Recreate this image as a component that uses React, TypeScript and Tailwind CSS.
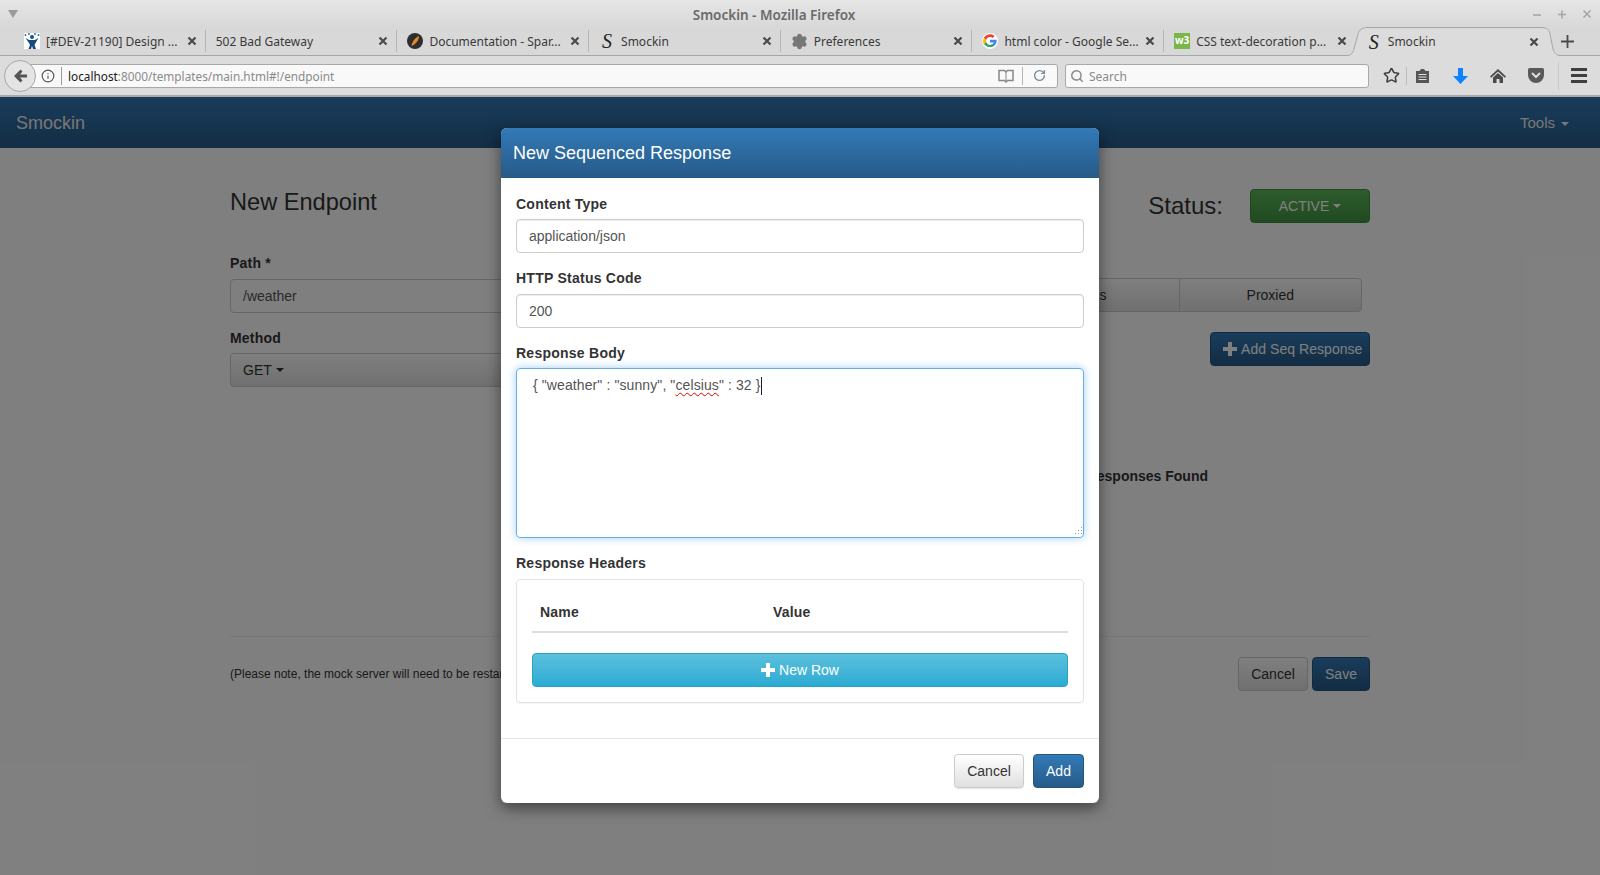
import { Settings, Star, Info, RotateCw, Search } from "lucide-react";

const sans = "font-['Liberation_Sans',Arial,sans-serif]";
const uiFont = "font-['Noto_Sans',sans-serif]";

function CloseX() {
  return (
    <svg width="10" height="10" viewBox="0 0 10 10" className="shrink-0">
      <path d="M1.5 1.5l7 7M8.5 1.5l-7 7" stroke="#4a4a4a" strokeWidth="2.2" />
    </svg>
  );
}

function Plus({ size = 14 }: { size?: number }) {
  return (
    <svg width={size} height={size} viewBox="0 0 14 14" className="shrink-0">
      <path d="M5 0h4v5h5v4H9v5H5V9H0V5h5z" fill="currentColor" />
    </svg>
  );
}

function JiraIcon() {
  return (
    <svg width="16" height="16" viewBox="0 0 16 16" className="shrink-0">
      <rect width="16" height="16" fill="#fff" />
      <circle cx="8" cy="4" r="2" fill="#1b4f80" />
      <path d="M1.5 5L5 7h6l3.5-2-3 5-1 2 1.5 4H9L8 13l-1 3H4.500L6 12l-1-2z" fill="#174a7c" />
      <circle cx="1.500" cy="2" r="1" fill="#3572b0" />
      <circle cx="5" cy="1" r="1" fill="#3572b0" />
      <circle cx="11" cy="1" r="1" fill="#3572b0" />
      <circle cx="14.500" cy="2" r="1" fill="#3572b0" />
    </svg>
  );
}

function SparkIcon() {
  return (
    <svg width="16" height="16" viewBox="0 0 16 16" className="shrink-0">
      <circle cx="8" cy="8" r="8" fill="#2e2e2e" />
      <path d="M4.500 13C5 9 8 4.500 12 3c0 4-3 8-7.500 10z" fill="#e08a2c" />
    </svg>
  );
}

function GoogleIcon() {
  return (
    <svg width="16" height="16" viewBox="0 0 48 48" className="shrink-0">
      <circle cx="24" cy="24" r="24" fill="#fff" />
      <path d="M43.600 20H24v8.500h11.300C33.700 33.400 29.300 36 24 36c-6.600 0-12-5.400-12-12h-1l-6 6c3 7 10.500 12 19 12 11 0 20-8 20-18 0-1.400-.1-2.700-.4-4z" fill="#4285f4" />
      <path d="M5 30c3 7 10.500 12 19 12 5 0 9.500-1.700 13-4.500L31 33c-2 1.900-4.200 3-7 3-5 0-9.500-3.200-11.200-7.700z" fill="#34a853" />
      <path d="M12 24c0-1.400.3-2.800.7-4l-7-5.400C4 17.500 3 20.700 3 24s1 6.500 2.700 9.400l7-5.400c-.4-1.200-.7-2.600-.7-4z" fill="#fbbc05" />
      <path d="M24 12c3 0 5.600 1 7.700 3l6-6C34.200 5.800 29.400 4 24 4 16 4 9 8.600 5.700 14.600l7 5.400C14.400 15.400 18.800 12 24 12z" fill="#ea4335" />
    </svg>
  );
}

function W3Icon() {
  return (
    <span className="w-[16px] h-[16px] shrink-0 bg-[#7ab648] text-white text-[10px] leading-[15px] font-bold text-center overflow-hidden">
      w3
    </span>
  );
}

function SIcon() {
  return (
    <span className="w-[16px] h-[18px] shrink-0 text-[#222] text-[20px] leading-[18px] italic text-center font-['Liberation_Serif',serif]">
      S
    </span>
  );
}

const tabs = [
  { icon: <JiraIcon />, label: "[#DEV-21190] Design ..." },
  { icon: null, label: "502 Bad Gateway" },
  { icon: <SparkIcon />, label: "Documentation - Spar..." },
  { icon: <SIcon />, label: "Smockin" },
  { icon: <Settings size={17} fill="#777" stroke="#777" className="shrink-0" />, label: "Preferences" },
  { icon: <GoogleIcon />, label: "html color - Google Se..." },
  { icon: <W3Icon />, label: "CSS text-decoration p..." },
];

function BrowserChrome() {
  return (
    <div className={`${uiFont} shrink-0 text-[12px] text-[#3a3a3a]`}>
      <div className="h-[27px] bg-gradient-to-b from-[#e6e6e6] to-[#d8d8d8] flex items-center relative">
        <svg width="10" height="8" viewBox="0 0 10 8" className="ml-[8px]">
          <path d="M0 0h10L5 8z" fill="#9a9a9a" />
        </svg>
        <div className="absolute left-0 right-[52px] top-[5px] text-center text-[13.5px] font-semibold text-[#6a6a6a]">Smockin - Mozilla Firefox</div>
        <div className="ml-auto flex items-center gap-[15px] pr-[8px] text-[#a5a5a5]">
          <svg width="10" height="10" viewBox="0 0 10 10"><path d="M1 6h8" stroke="currentColor" strokeWidth="1.500" /></svg>
          <svg width="10" height="10" viewBox="0 0 10 10"><path d="M1 5.500h8M5 1.500v8" stroke="currentColor" strokeWidth="1.500" /></svg>
          <svg width="10" height="10" viewBox="0 0 10 10"><path d="M1.500 1.500l7 7M8.500 1.500l-7 7" stroke="currentColor" strokeWidth="1.500" /></svg>
        </div>
      </div>
      <div className="h-[29px] bg-[#d8d8d8] border-b border-[#a6a6a6] flex pl-[14px]">
        {tabs.map((t, i) => (
          <div key={t.label} className="w-[191.7px] h-[28px] flex items-center pl-[10px] pr-[8px] gap-[6px]">
            {t.icon}
            <span className="flex-1 whitespace-nowrap pt-[2px]">{t.label}</span>
            <CloseX />
            {i < tabs.length - 1 ? (
              <span className="w-px h-[22px] bg-[#b5b5b5] -mr-[8px] ml-[2px] shrink-0" />
            ) : (
              <span className="w-px h-[22px] -mr-[8px] ml-[2px] shrink-0" />
            )}
          </div>
        ))}
        <div className="relative w-[199px] h-[29px] -ml-[3px] flex items-center pl-[13px] pr-[13px] gap-[6px]">
          <svg width="213" height="29" viewBox="0 0 213 29" className="absolute -left-[6px] top-0">
            <path d="M0 29V28.500C4 28.500 6 26 7 22L11 7C12 3 15 .5 21 .5H194C200 .5 202 3 203 7L206 22C207 26 210 28.500 213 28.500V29z" fill="#dcdcdc" />
            <path d="M0 28.500C4 28.500 6 26 7 22L11 7C12 3 15 .5 21 .5H194C200 .5 202 3 203 7L206 22C207 26 210 28.500 213 28.500" stroke="#a6a6a6" fill="none" />
          </svg>
          <span className="relative flex items-center gap-[6px] flex-1">
            <SIcon />
            <span>Smockin</span>
          </span>
          <span className="relative"><CloseX /></span>
        </div>
        <div className="ml-[9px] h-[28px] flex items-center text-[#4a4a4a]">
          <svg width="13" height="13" viewBox="0 0 13 13"><path d="M0 6.500h13M6.500 0v13" stroke="currentColor" strokeWidth="1.800" /></svg>
        </div>
      </div>
      <div className="h-[41px] bg-[#dcdcdc] border-b-2 border-[#a9a9a9] flex items-center relative">
        <div className="absolute left-[4px] top-[4px] w-[32px] h-[32px] rounded-full border border-[#a8a8a8] bg-[#e4e4e4] flex items-center justify-center z-10">
          <svg width="16" height="16" viewBox="0 0 16 16"><path d="M8.500 1.500L2 8l6.500 6.500 2-2L8 9.500h7v-3H8l2.500-3z" fill="#555" /></svg>
        </div>
        <div className="ml-[20px] w-[1038px] h-[24px] bg-[#f9f9f9] border border-[#a8a8a8] rounded-r-[3px] flex items-center pl-[20px] pr-[9px] text-[#8a8a8a]">
          <Info size={14} stroke="#555" className="shrink-0" />
          <span className="w-px h-[18px] bg-[#9a9a9a] ml-[6px] mr-[6px]" />
          <span className="pt-[2px] text-[11.800px]"><span className="text-[#1a1a1a]">localhost</span>:8000/templates/main.html#!/endpoint</span>
          <svg width="16" height="14" viewBox="0 0 16 14" className="ml-auto mr-[8px]">
            <path d="M1 1.500h5.500L8 3l1.500-1.500H15v10H9.500L8 13l-1.500-1.500H1z" fill="none" stroke="#888" strokeWidth="1.500" />
            <path d="M8 3v9" stroke="#888" />
          </svg>
          <span className="w-px h-[18px] bg-[#b5b5b5]" />
          <RotateCw size={13} stroke="#7d8a96" strokeWidth={2.500} className="ml-[10px] mr-[2px]" />
        </div>
        <div className="ml-[7px] w-[304px] h-[24px] bg-[#f9f9f9] border border-[#a8a8a8] rounded-[3px] flex items-center pl-[4px] gap-[5px] text-[#8a8a8a]">
          <Search size={14} stroke="#888" strokeWidth={2.500} />
          <span className="pt-[2px]">Search</span>
        </div>
        <Star size={17} stroke="#3f3f3f" strokeWidth={2.200} className="ml-[14px]" />
        <span className="w-px h-[18px] bg-[#bcbcbc] ml-[6px]" />
        <svg width="15" height="16" viewBox="0 0 15 16" className="ml-[8px]">
          <path d="M1 3h3.500L6 1h3l1.500 2H14v12H1z" fill="#555" />
          <path d="M3.500 6.500h8M3.500 9h8M3.500 11.500h8" stroke="#dcdcdc" />
        </svg>
        <svg width="15" height="16" viewBox="0 0 15 16" className="ml-[23px]">
          <path d="M5 0h5v8h5l-7.500 8L0 8h5z" fill="#0a84ff" />
        </svg>
        <svg width="16" height="16" viewBox="0 0 16 16" className="ml-[22px]">
          <path d="M8 1L0 8.500l1.200 1.200L8 3.500l6.800 6.200L16 8.500z" fill="#4a4a4a" />
          <path d="M8 5l-5 4.500V15h3.500v-4h3v4H13V9.500z" fill="#4a4a4a" />
        </svg>
        <svg width="16" height="15" viewBox="0 0 16 15" className="ml-[22px]">
          <path d="M1.500 0h13A1.500 1.500 0 0 1 16 1.500V7a8 8 0 0 1-16 0V1.500A1.500 1.500 0 0 1 1.500 0z" fill="#5a5a5a" />
          <path d="M4 5l4 4 4-4" stroke="#dcdcdc" strokeWidth="2" fill="none" />
        </svg>
        <span className="w-px h-[28px] bg-[#c8c8c8] ml-[14px]" />
        <div className="ml-[12px] flex flex-col gap-[3px]">
          <span className="w-[16px] h-[3px] bg-[#3f3f3f]" />
          <span className="w-[16px] h-[3px] bg-[#3f3f3f]" />
          <span className="w-[16px] h-[3px] bg-[#3f3f3f]" />
        </div>
      </div>
    </div>
  );
}

function Caret({ gap = "ml-[4px]" }: { gap?: string }) {
  return <span className={`inline-block ${gap} align-middle border-x-[4px] border-x-transparent border-t-[4px] border-t-current`} />;
}

function EndpointPage() {
  return (
    <div className={`${sans} bg-white text-[14px] text-[#333] h-full`}>
      <div className="h-[51px] bg-gradient-to-b from-[#337ab7] to-[#265a88] flex items-center justify-between pl-[16px] pr-[31px] text-[#eee]">
        <span className="text-[18px] pt-[1px]">Smockin</span>
        <span className="text-[15px] pt-[1px]">Tools<Caret gap="ml-[6px]" /></span>
      </div>
      <div className="w-[1140px] mx-auto">
        <div className="flex h-[489px] border-b border-[#eee]">
          <div className="w-[560px] pt-[38px]">
            <div className="text-[23.6px] leading-[32px] mb-[35px]">New Endpoint</div>
            <div className="font-bold leading-[20px] mb-[6px] tracking-[0.2px]">Path *</div>
            <div className="h-[34px] border border-[#ccc] rounded-[4px] px-[12px] flex items-center text-[#555] mb-[15px]">/weather</div>
            <div className="font-bold leading-[20px] mb-[5px] tracking-[0.2px]">Method</div>
            <div className="h-[34px] border border-[#ccc] rounded-[4px] px-[12px] flex items-center bg-gradient-to-b from-white to-[#e0e0e0]">GET<Caret /></div>
          </div>
          <div className="flex-1 flex flex-col items-end pt-[41px]">
            <div className="flex items-center gap-[27px] h-[34px]">
              <span className="text-[24px] leading-[32px]">Status:</span>
              <span className="w-[120px] h-[34px] rounded-[4px] border border-[#3e8f3e] bg-gradient-to-b from-[#5cb85c] to-[#419641] text-white flex items-center justify-center">ACTIVE<Caret /></span>
            </div>
            <div className="mt-[55px] mr-[8px] w-[546px] h-[34px] grid grid-cols-3 border border-[#ccc] rounded-[4px] bg-gradient-to-b from-white to-[#e0e0e0] text-center leading-[32px]">
              <span className="border-r border-[#ccc]">Single</span>
              <span className="border-r border-[#ccc]">Rules</span>
              <span>Proxied</span>
            </div>
            <div className="mt-[20px] w-[160px] h-[34px] rounded-[4px] border border-[#245580] bg-gradient-to-b from-[#337ab7] to-[#265a88] text-white flex items-center pl-[12px] gap-[4px] whitespace-nowrap tracking-[0.05px]">
              <Plus />Add Seq Response
            </div>
            <div className="mt-[100px] mr-[162px] font-bold leading-[20px]">No Sequenced Responses Found</div>
          </div>
        </div>
        <div className="flex items-center justify-between mt-[20px] text-[12px]">
          <span>(Please note, the mock server will need to be restarted for any changes to take effect)</span>
          <div className="flex gap-[4px] text-[14px]">
            <span className="w-[70px] h-[34px] rounded-[4px] border border-[#ccc] bg-gradient-to-b from-white to-[#e0e0e0] flex items-center justify-center">Cancel</span>
            <span className="w-[58px] h-[34px] rounded-[4px] border border-[#245580] bg-gradient-to-b from-[#337ab7] to-[#265a88] text-white flex items-center justify-center">Save</span>
          </div>
        </div>
      </div>
    </div>
  );
}

function ResponseModal() {
  const inputCls = "h-[34px] border border-[#ccc] rounded-[4px] px-[12px] flex items-center text-[#555] shadow-[inset_0_1px_1px_rgba(0,0,0,0.075)]";
  const labelCls = "font-bold leading-[20px] tracking-[0.25px]";
  return (
    <div className={`${sans} w-[598px] h-[675px] bg-white rounded-[6px] shadow-[0_5px_15px_rgba(0,0,0,0.5)] text-[14px] text-[#333]`}>
      <div className="h-[50px] rounded-t-[6px] bg-gradient-to-b from-[#337ab7] to-[#265a88] flex items-center pl-[12px] text-[18px] text-white">
        New Sequenced Response
      </div>
      <div className="px-[15px] pt-[16px]">
        <div className={`${labelCls} mb-[5px]`}>Content Type</div>
        <div className={`${inputCls} mb-[15px]`}>application/json</div>
        <div className={`${labelCls} mb-[6px]`}>HTTP Status Code</div>
        <div className={`${inputCls} mb-[15px]`}>200</div>
        <div className={`${labelCls} mb-[5px]`}>Response Body</div>
        <div className="relative h-[170px] border border-[#66afe9] rounded-[4px] shadow-[0_0_8px_rgba(102,175,233,0.6)] pl-[16px] pt-[6px] leading-[20px] text-[#555] mb-[15px] tracking-[0.1px]">
          {'{ "weather" : "sunny", '}
          <span>"</span>
          <span className="underline decoration-wavy decoration-[#e00000] decoration-1 underline-offset-2">celsius</span>
          {'" : 32 }'}
          <span className="inline-block w-px h-[18px] bg-[#222] align-middle" />
          <svg width="10" height="10" viewBox="0 0 10 10" className="absolute right-[1px] bottom-[1px]">
            <path d="M9 1h1v1H9zM6 4h1v1H6zM9 4h1v1H9zM3 7h1v1H3zM6 7h1v1H6zM9 7h1v1H9z" fill="#9a9a9a" />
          </svg>
        </div>
        <div className={`${labelCls} mb-[6px]`}>Response Headers</div>
        <div className="h-[124px] border border-[#e3e3e3] rounded-[4px] px-[15px] pt-[15px] shadow-[0_1px_1px_rgba(0,0,0,0.05)]">
          <div className="flex h-[34px] items-center border-b-2 border-[#ddd] font-bold box-content pb-[2px] tracking-[0.2px]">
            <span className="pl-[8px] w-[233px]">Name</span>
            <span className="pl-[8px]">Value</span>
          </div>
          <div className="mt-[20px] h-[34px] rounded-[4px] border border-[#28a4c9] bg-gradient-to-b from-[#5bc0de] to-[#2aabd2] text-white flex items-center justify-center gap-[4px]">
            <Plus />New Row
          </div>
        </div>
      </div>
      <div className="mt-[35px] border-t border-[#e5e5e5] px-[15px] pt-[15px] flex justify-end gap-[9px]">
        <span className="w-[70px] h-[34px] rounded-[4px] border border-[#ccc] bg-gradient-to-b from-white to-[#e0e0e0] shadow-[0_1px_1px_rgba(0,0,0,0.1)] flex items-center justify-center">Cancel</span>
        <span className="w-[51px] h-[34px] rounded-[4px] border border-[#245580] bg-gradient-to-b from-[#337ab7] to-[#265a88] text-white flex items-center justify-center">Add</span>
      </div>
    </div>
  );
}

export default function App() {
  return (
    <div className="h-[875px] flex flex-col overflow-hidden">
      <BrowserChrome />
      <div className="relative flex-1">
        <EndpointPage />
        <div className="absolute inset-0 bg-black/50 flex justify-center pt-[31px]">
          <ResponseModal />
        </div>
      </div>
    </div>
  );
}
